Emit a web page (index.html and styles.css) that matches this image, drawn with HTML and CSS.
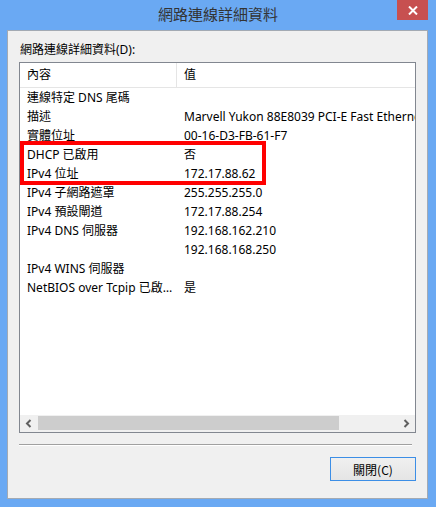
FILE: index.html
```html
<!DOCTYPE html>
<html lang="zh-Hant">
<head>
    <meta charset="UTF-8">
    <title>網路連線詳細資料</title>
    <link rel="stylesheet" href="styles.css">
</head>
<body>
    <div class="window">
        <div class="title-bar">
            <span class="title">網路連線詳細資料</span>
            <button class="close" aria-label="關閉">
                <svg width="10" height="9" viewBox="0 0 10 9">
                    <path d="M1 0.5 L9 8.5 M9 0.5 L1 8.5" stroke="#fff" stroke-width="2"/>
                </svg>
            </button>
        </div>
        <div class="client">
            <div class="label">網路連線詳細資料(D):</div>
            <div class="list">
                <div class="list-view">
                    <div class="list-head">
                        <span class="col-name">內容</span>
                        <span class="col-value">值</span>
                    </div>
                    <div class="row"><span class="col-name">連線特定 DNS 尾碼</span><span class="col-value"></span></div>
                    <div class="row"><span class="col-name">描述</span><span class="col-value">Marvell Yukon 88E8039 PCI-E Fast Ethernet Controller</span></div>
                    <div class="row"><span class="col-name">實體位址</span><span class="col-value">00-16-D3-FB-61-F7</span></div>
                    <div class="row"><span class="col-name">DHCP 已啟用</span><span class="col-value">否</span></div>
                    <div class="row"><span class="col-name">IPv4 位址</span><span class="col-value">172.17.88.62</span></div>
                    <div class="row"><span class="col-name">IPv4 子網路遮罩</span><span class="col-value">255.255.255.0</span></div>
                    <div class="row"><span class="col-name">IPv4 預設閘道</span><span class="col-value">172.17.88.254</span></div>
                    <div class="row"><span class="col-name">IPv4 DNS 伺服器</span><span class="col-value">192.168.162.210</span></div>
                    <div class="row"><span class="col-name"></span><span class="col-value">192.168.168.250</span></div>
                    <div class="row"><span class="col-name">IPv4 WINS 伺服器</span><span class="col-value"></span></div>
                    <div class="row"><span class="col-name">NetBIOS over Tcpip 已啟用</span><span class="col-value">是</span></div>
                </div>
                <div class="hscroll">
                    <span class="arrow">
                        <svg width="7" height="9" viewBox="0 0 7 9"><path d="M5.5 1 L2 4.5 L5.5 8" fill="none" stroke="#606060" stroke-width="2"/></svg>
                    </span>
                    <div class="track"><div class="thumb"></div></div>
                    <span class="arrow">
                        <svg width="7" height="9" viewBox="0 0 7 9"><path d="M1.5 1 L5 4.5 L1.5 8" fill="none" stroke="#606060" stroke-width="2"/></svg>
                    </span>
                </div>
                <div class="mark"></div>
            </div>
            <div class="separator"></div>
            <div class="footer">
                <button class="btn">關閉(C)</button>
            </div>
        </div>
    </div>
</body>
</html>
```

FILE: styles.css
```css
body {
    margin: 0;
    padding: 0;
    background: #6aa9f3;
    font-family: "Noto Sans", "Noto Sans CJK TC", sans-serif;
    font-size: 12px;
    color: #000;
}

.window {
    width: 436px;
    height: 507px;
    box-sizing: border-box;
    padding: 0 8px 8px 7px;
    background: #6aa9f3;
    display: flex;
    flex-direction: column;
}

.title-bar {
    height: 30px;
    display: grid;
    grid-template-columns: 1fr auto 1fr;
    margin-right: -8px;
    margin-left: -7px;
}

.title {
    grid-column: 2;
    font-size: 15px;
    line-height: 28px;
    color: #333;
    font-family: "Noto Sans CJK TC", sans-serif;
}

.close {
    grid-column: 3;
    justify-self: end;
    width: 31px;
    height: 20px;
    margin-right: 8px;
    padding: 0;
    border: none;
    background: #c75050;
    display: flex;
    align-items: center;
    justify-content: center;
}

.client {
    flex: 1;
    background: #f0f0f0;
    border: 1px solid #a3aab3;
    padding: 11px 11px 0;
    display: flex;
    flex-direction: column;
}

.label {
    line-height: 16px;
    padding-left: 1px;
    margin-bottom: 4px;
}

.list {
    position: relative;
    height: 371px;
    box-sizing: border-box;
    border: 1px solid #828790;
    background: #fff;
    display: flex;
    flex-direction: column;
}

.list-view {
    flex: 1;
    overflow: hidden;
}

.list-head,
.row {
    display: grid;
    grid-template-columns: 157px 400px;
    white-space: nowrap;
}

.list-head {
    height: 24px;
    line-height: 24px;
    border-bottom: 1px solid #e5e5e5;
}

.list-head .col-name {
    border-right: 1px solid #e5e5e5;
}

.row {
    height: 19px;
    line-height: 19px;
}

.col-name,
.col-value {
    padding-left: 7px;
    overflow: hidden;
    text-overflow: ellipsis;
}

.row .col-name {
    padding-right: 4px;
}

.row .col-value {
    text-overflow: clip;
}

.hscroll {
    height: 17px;
    display: flex;
    background: #f0f0f0;
}

.hscroll .arrow {
    width: 17px;
    display: flex;
    align-items: center;
    justify-content: center;
}

.track {
    flex: 1;
    padding: 1px 0 2px 1px;
}

.thumb {
    width: 301px;
    height: 100%;
    background: #cdcdcd;
}

.mark {
    position: absolute;
    left: 0;
    top: 78px;
    width: 238px;
    height: 36px;
    border: 4px solid #f00;
}

.separator {
    margin-top: 11px;
    width: 393px;
    height: 1px;
    background: #a0a0a0;
    border-bottom: 1px solid #fff;
}

.footer {
    display: flex;
    justify-content: flex-end;
    margin-top: 11px;
}

.btn {
    width: 86px;
    height: 24px;
    padding: 0;
    border: 1px solid #3c8ee6;
    background: linear-gradient(#f0f0f0, #e5e5e5);
    font-family: "Noto Sans CJK TC", sans-serif;
    font-size: 12px;
    color: #000;
}
```
